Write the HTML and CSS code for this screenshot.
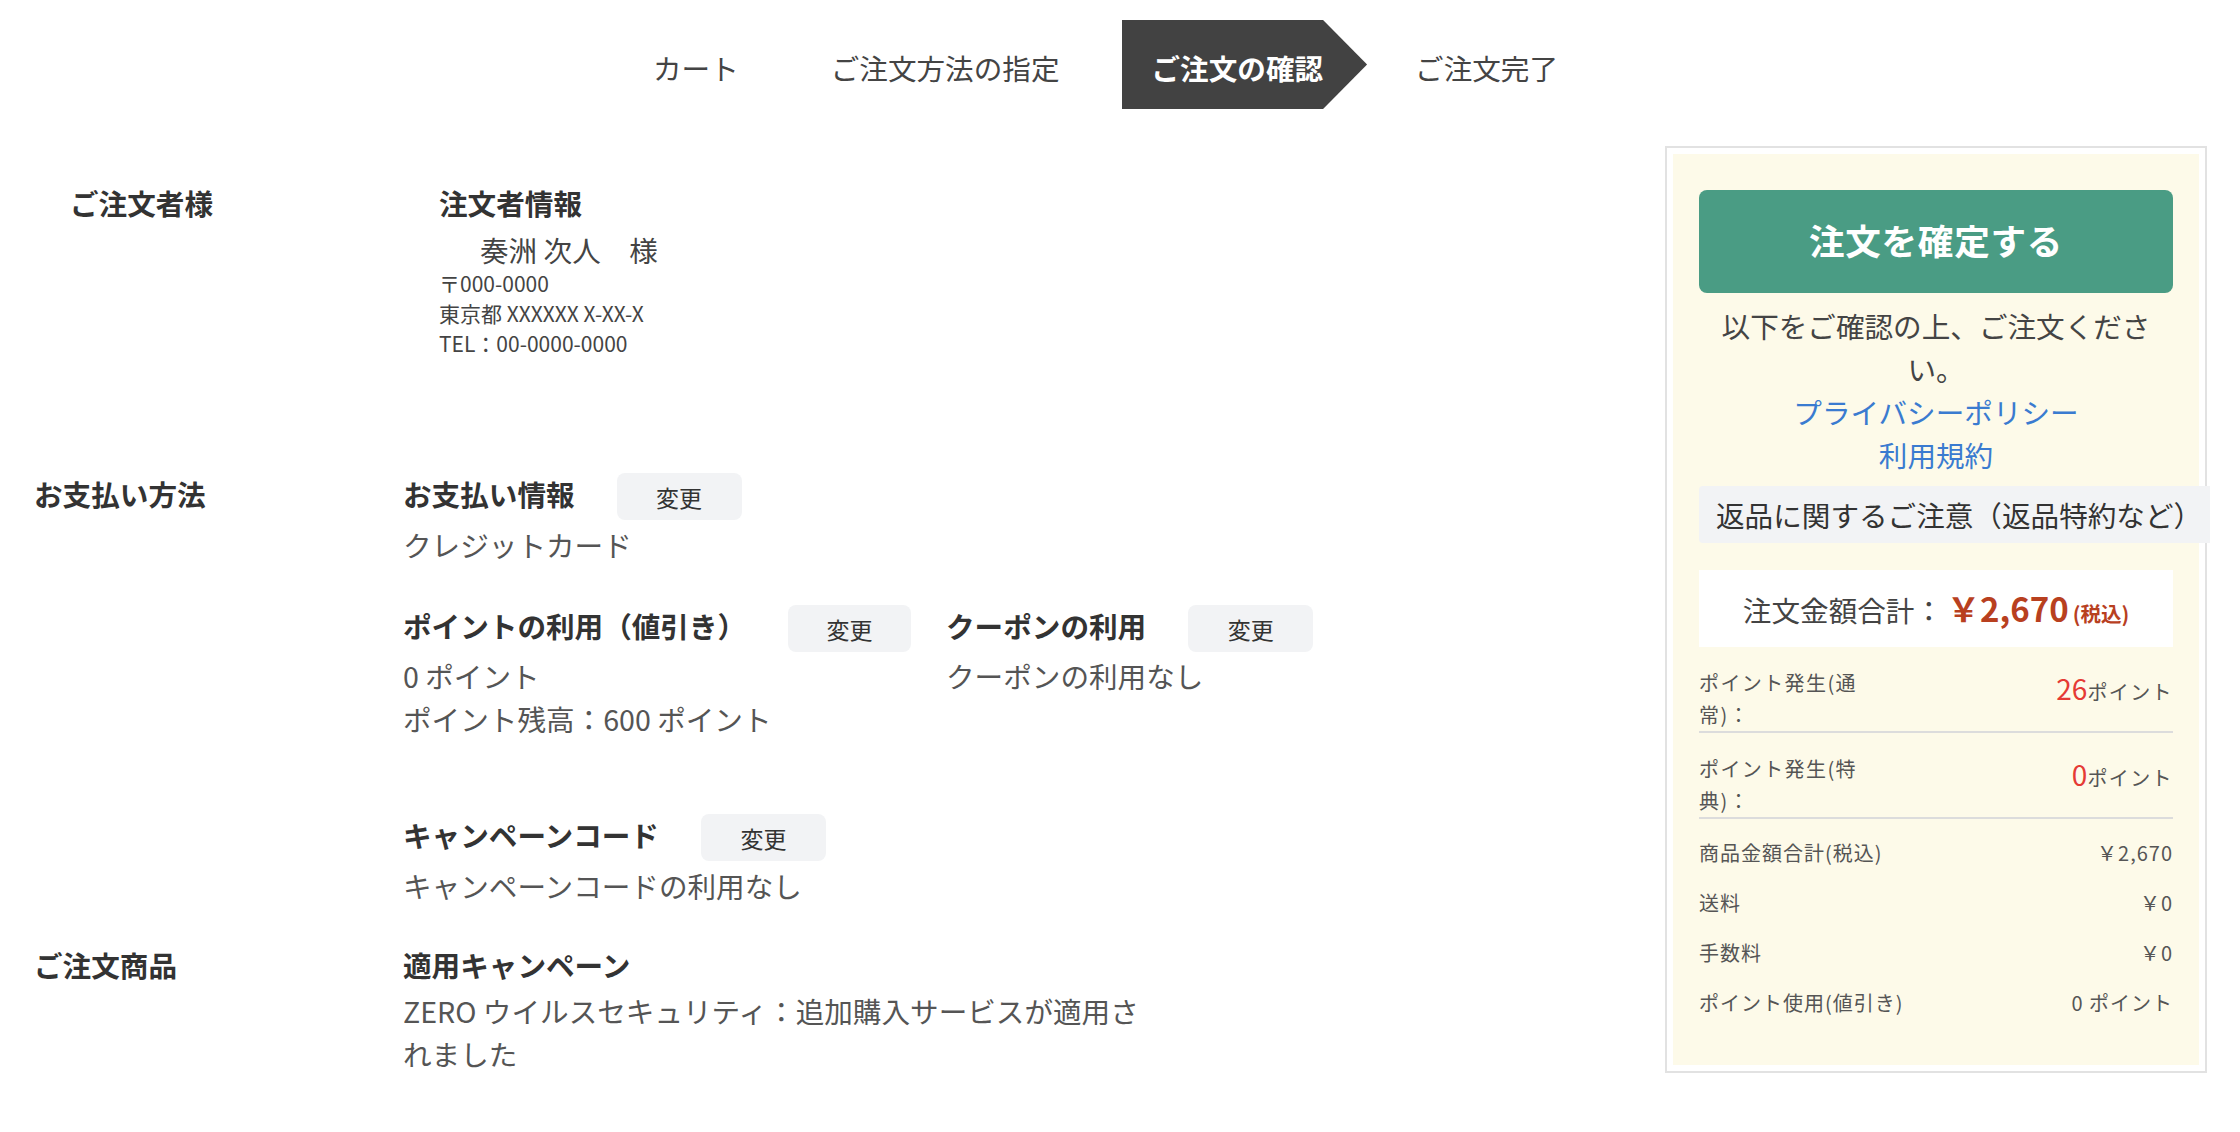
FILE: index.html
```html
<!DOCTYPE html>
<html lang="ja">
<head>
<meta charset="utf-8">
<title>ご注文の確認</title>
<link rel="stylesheet" href="styles.css">
</head>
<body>
<nav class="steps">
  <div class="step">カート</div>
  <div class="step">ご注文方法の指定</div>
  <div class="step step-active">ご注文の確認</div>
  <div class="step">ご注文完了</div>
</nav>

<div class="layout">
  <div class="main-col">
    <section class="sec sec-orderer">
      <h2 class="sec-label">ご注文者様</h2>
      <div class="sec-body">
        <div class="title-row"><h3 class="sub-title">注文者情報</h3></div>
        <p class="name">奏洲 次人　様</p>
        <p class="small">〒000-0000<br>東京都 XXXXXX X-XX-X<br>TEL：00-0000-0000</p>
      </div>
    </section>

    <section class="sec sec-pay">
      <h2 class="sec-label">お支払い方法</h2>
      <div class="sec-body">
        <div class="block">
          <div class="title-row"><h3 class="sub-title">お支払い情報</h3><button class="btn-change">変更</button></div>
          <p class="text">クレジットカード</p>
        </div>
        <div class="pair">
          <div class="block block-points">
            <div class="title-row"><h3 class="sub-title">ポイントの利用（値引き）</h3><button class="btn-change">変更</button></div>
            <p class="text">0 ポイント<br>ポイント残高：600 ポイント</p>
          </div>
          <div class="block">
            <div class="title-row"><h3 class="sub-title">クーポンの利用</h3><button class="btn-change">変更</button></div>
            <p class="text">クーポンの利用なし</p>
          </div>
        </div>
        <div class="block block-campaign">
          <div class="title-row"><h3 class="sub-title">キャンペーンコード</h3><button class="btn-change">変更</button></div>
          <p class="text">キャンペーンコードの利用なし</p>
        </div>
      </div>
    </section>

    <section class="sec sec-items">
      <h2 class="sec-label">ご注文商品</h2>
      <div class="sec-body body-narrow">
        <div class="title-row"><h3 class="sub-title">適用キャンペーン</h3></div>
        <p class="text">ZERO ウイルスセキュリティ：追加購入サービスが適用されました</p>
      </div>
    </section>
  </div>

  <aside class="sidebar">
    <div class="panel">
      <button class="btn-confirm">注文を確定する</button>
      <p class="note">以下をご確認の上、ご注文ください。</p>
      <a class="link" href="#">プライバシーポリシー</a>
      <a class="link" href="#">利用規約</a>
      <div class="return-note">返品に関するご注意（返品特約など）</div>
      <div class="total-box">
        <span class="total-label">注文金額合計：</span><span class="total-price">￥2,670</span><span class="total-tax">(税込)</span>
      </div>
      <div class="pt-row">
        <span class="pt-label">ポイント発生(通常)：</span>
        <span class="pt-value"><span class="pt-num">26</span>ポイント</span>
      </div>
      <div class="pt-row">
        <span class="pt-label">ポイント発生(特典)：</span>
        <span class="pt-value"><span class="pt-num">0</span>ポイント</span>
      </div>
      <div class="fee-row fee-first"><span>商品金額合計(税込)</span><span>￥2,670</span></div>
      <div class="fee-row"><span>送料</span><span>￥0</span></div>
      <div class="fee-row"><span>手数料</span><span>￥0</span></div>
      <div class="fee-row"><span>ポイント使用(値引き)</span><span>0 ポイント</span></div>
    </div>
  </aside>
</div>
</body>
</html>
```

FILE: styles.css
```css
* { box-sizing: border-box; }
html, body { margin: 0; padding: 0; background: #fff; }
body {
  font-family: "Noto Sans CJK JP", "Noto Sans", sans-serif;
  font-size: 28.6px;
  color: #555;
  width: 2240px;
}
h2, h3, p { margin: 0; font-size: inherit; }

/* ---- stepper ---- */
.steps {
  display: flex;
  justify-content: center;
  gap: 18px;
  padding-top: 20px;
  padding-right: 15px;
  height: 109px;
}
.step {
  height: 89px;
  padding: 6px 44px 0 30px;
  line-height: 83px;
  color: #444;
  font-size: 28.6px;
  white-space: nowrap;
}
.step-active {
  background: #424242;
  color: #fff;
  font-weight: 700;
  clip-path: polygon(0 0, calc(100% - 44px) 0, 100% 50%, calc(100% - 44px) 100%, 0 100%);
}

/* ---- layout ---- */
.layout {
  display: flex;
  align-items: flex-start;
  margin-top: 37px;
  padding-right: 33px;
}
.main-col {
  flex: 1;
  padding-left: 34px;
}

.sec {
  display: grid;
  grid-template-columns: 369px 1fr;
}
.sec-label {
  font-weight: 700;
  color: #333;
  line-height: 42px;
  padding-bottom: 5px;
  white-space: nowrap;
}
.sec-orderer {
  margin-left: 36px;
  padding-top: 36px;
}
.sec-pay { margin-top: 115px; }
.sec-items { margin-top: 39px; }
.sec-items .sec-label { line-height: 38px; }

.title-row {
  display: flex;
  align-items: center;
  min-height: 47px;
}
.sec-items .title-row { min-height: 43px; }
.sub-title {
  font-weight: 700;
  color: #333;
  line-height: 37px;
  padding-bottom: 6px;
  white-space: nowrap;
}
.btn-change {
  margin-left: 42px;
  width: 125px;
  height: 47px;
  border: none;
  border-radius: 8px;
  background: #f2f3f5;
  color: #333;
  font-family: inherit;
  font-size: 23px;
  padding: 0;
}

.name {
  margin-top: 3px;
  padding-left: 41px;
  line-height: 36px;
  color: #444;
}
.small {
  font-size: 21px;
  line-height: 30px;
  color: #444;
}

.text {
  margin-top: 3px;
  line-height: 43px;
  color: #555;
}
.pair {
  display: flex;
  gap: 35px;
  margin-top: 39px;
}
.block-points { width: 508px; }
.pair .text { margin-top: 2px; }
.block-campaign { margin-top: 74px; }
.body-narrow { max-width: 750px; }
.body-narrow .text { margin-top: 0; }

/* ---- sidebar ---- */
.sidebar {
  width: 542px;
  border: 2px solid #e2e2e2;
  padding: 6px;
  background: #fff;
}
.panel {
  background: #fdfae9;
  padding: 36px 26px 46px;
}
.btn-confirm {
  display: block;
  width: 100%;
  height: 103px;
  padding: 0 0 4px;
  border: none;
  border-radius: 8px;
  background: #4a9c84;
  color: #fff;
  font-family: inherit;
  font-size: 35.6px;
  font-weight: 700;
  letter-spacing: 0.02em;
}
.note {
  margin-top: 11px;
  line-height: 43px;
  text-align: center;
  color: #444;
}
.link {
  display: block;
  text-align: center;
  line-height: 43px;
  color: #3a7bd0;
  text-decoration: none;
}
.return-note {
  margin-top: 10px;
  width: max-content;
  height: 57px;
  line-height: 57px;
  padding: 0 8px 0 17px;
  background: #f2f3f5;
  border-radius: 4px 0 0 4px;
  color: #333;
  white-space: nowrap;
}
.total-box {
  margin-top: 27px;
  height: 77px;
  line-height: 77px;
  background: #fff;
  text-align: center;
  white-space: nowrap;
}
.total-label {
  font-size: 28.6px;
  color: #444;
}
.total-price {
  margin-left: 4px;
  font-size: 33px;
  font-weight: 700;
  color: #b8401f;
}
.total-tax {
  margin-left: 4px;
  font-size: 20.5px;
  font-weight: 700;
  color: #b8401f;
}

.pt-row {
  display: flex;
  justify-content: space-between;
  align-items: flex-start;
  padding-top: 20px;
  border-bottom: 2px solid #dcdcdc;
  font-size: 20px;
  color: #555;
  letter-spacing: 0.07em;
}
.pt-row:first-of-type { margin-top: 2px; }
.pt-label {
  width: 180px;
  line-height: 32px;
}
.pt-value {
  line-height: 42px;
  white-space: nowrap;
}
.pt-num {
  font-size: 28px;
  color: #e53a35;
  letter-spacing: 0;
}

.fee-row {
  display: flex;
  justify-content: space-between;
  padding-top: 18px;
  line-height: 32px;
  font-size: 20px;
  color: #555;
  letter-spacing: 0.05em;
}
```
